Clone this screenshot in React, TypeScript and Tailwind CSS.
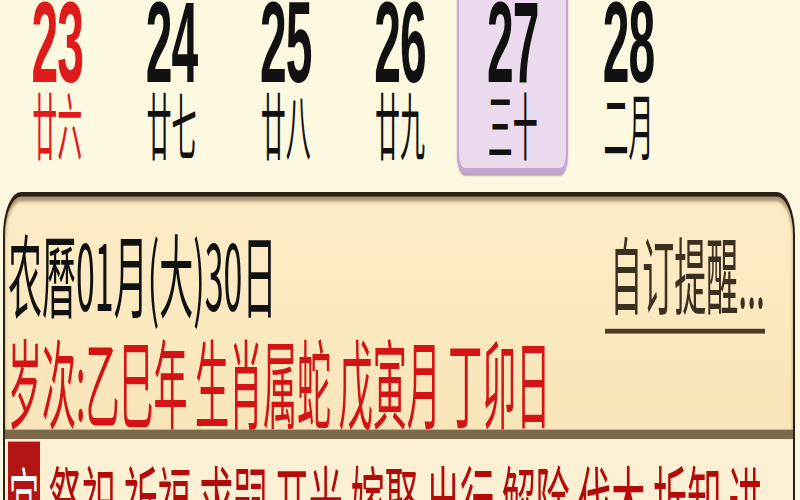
import React from 'react';

type Day = { num: string; lunar: string; holiday?: boolean; today?: boolean };

const days: Day[] = [
  { num: '23', lunar: '廿六', holiday: true },
  { num: '24', lunar: '廿七' },
  { num: '25', lunar: '廿八' },
  { num: '26', lunar: '廿九' },
  { num: '27', lunar: '三十', today: true },
  { num: '28', lunar: '二月' },
];

const cjk = { fontFamily: '"Noto Sans CJK SC", "Noto Sans", sans-serif' };

function DayCell({ day }: { day: Day }) {
  const color = day.holiday ? 'text-[#e01a1a]' : 'text-[#111]';
  return (
    <div
      className={
        day.today
          ? 'flex flex-col items-center mt-[-10px] mr-[3px] h-[82px] pt-[10px] bg-[#ecdaee] border-x-2 border-b-2 border-[#c5a6d6] rounded-b-[8px] shadow-[0_1px_1px_rgba(120,90,140,0.5)]'
          : 'flex flex-col items-center h-[72px]'
      }
    >
      <div
        className={`text-[48px] font-bold leading-none mt-[-6px] tracking-[-1px] ${color}`}
        style={{ fontFamily: '"Liberation Sans", Arial, sans-serif' }}
      >
        {day.num}
      </div>
      <div className={`h-[26px] mt-[-4px] flex items-center text-[25px] leading-none ${color}`} style={cjk}>
        <span className="inline-block scale-y-[1.22]">{day.lunar}</span>
      </div>
    </div>
  );
}

export default function App() {
  return (
    <div className="w-[800px] h-[500px] overflow-hidden bg-[#fdf9e0]">
      <div className="origin-top scale-y-[2.4] h-[210px]">
        {/* week strip */}
        <div className="grid grid-cols-7 h-[80px]">
          {days.map((d) => (
            <DayCell key={d.num} day={d} />
          ))}
          <div />
        </div>

        {/* day detail card */}
        <div
          className="ml-[3px] mr-[5px] border-t-2 border-x-2 border-[#2b2113] rounded-t-[18px] bg-gradient-to-b from-[#fcecc6] to-[#f7e2b3] shadow-[inset_0_2px_2px_rgba(70,45,10,0.45)] overflow-hidden"
          style={cjk}
        >
          <div className="flex justify-between items-start h-[57px] pt-[15px] pl-[3px] pr-[28px]">
            <div className="text-[34px] leading-[34px] text-[#111]">
              <span className="inline-block scale-y-[1.12]">农曆01月(大)30日</span>
            </div>
            <div className="pl-[5px] pb-[8px] border-b-2 border-[#4a3b22]">
              <div className="text-[32px] leading-[32px] text-[#3b2f1f]">
                <span className="inline-block scale-y-[1.1]">自订提醒...</span>
              </div>
            </div>
          </div>

          <div className="h-[40px] flex items-center pl-[3px] text-[34px] leading-none text-[#d41414] whitespace-nowrap">
            <span className="inline-block scale-y-[1.18]">岁次:乙巳年 生肖属蛇 戊寅月 丁卯日</span>
          </div>

          <div className="h-[4px] bg-[#7b6a4b]" />

          <div className="flex items-start gap-[8px] pl-[3px] bg-[#fbf0d3] h-[40px]">
            <div className="w-[32px] h-[40px] mt-[1px] bg-[#b31414] text-white text-[30px] leading-none flex justify-center pt-[8px]">
              宜
            </div>
            <div className="flex-1 pr-[10px] pt-[8px] text-[34px] leading-[36px] text-[#b50a0a]">
              祭祀 祈福 求嗣 开光 嫁娶 出行 解除 伐木 拆卸 进人口 安床 栽种
            </div>
          </div>
        </div>
      </div>
    </div>
  );
}
